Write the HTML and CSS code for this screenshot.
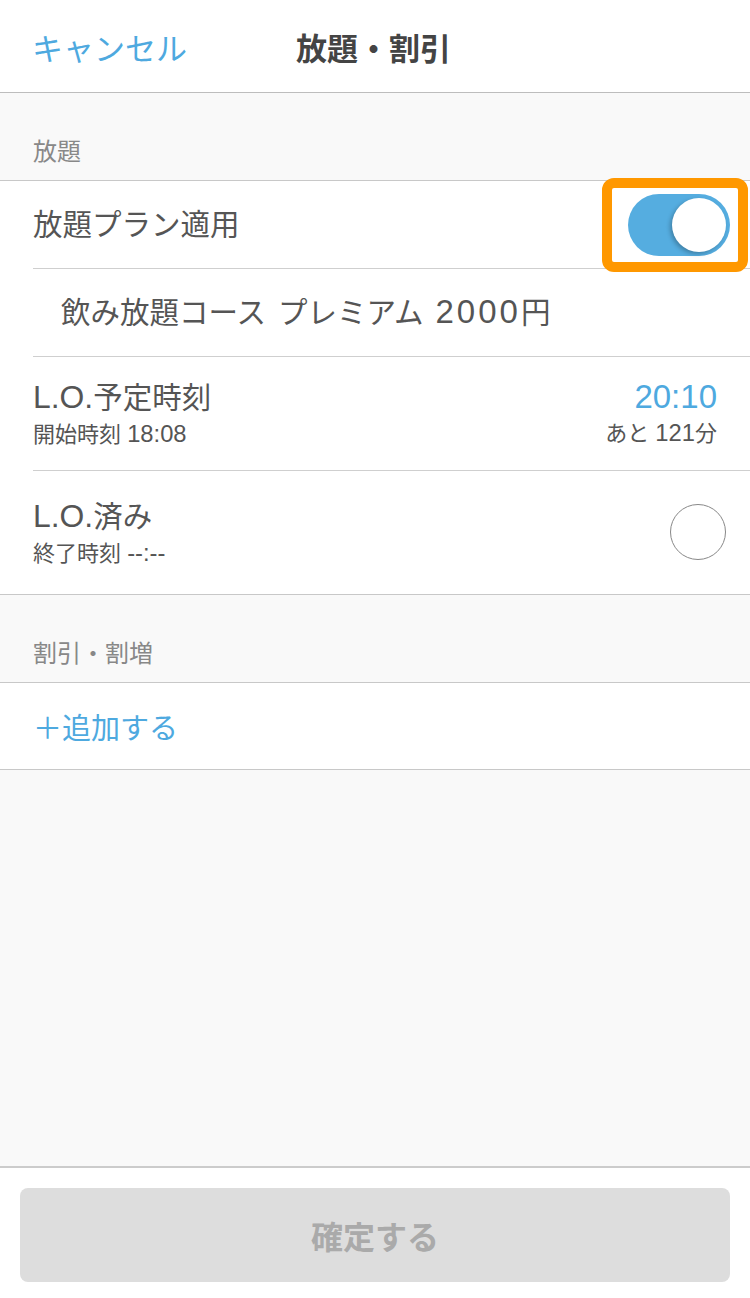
FILE: index.html
```html
<!DOCTYPE html>
<html lang="ja">
<head>
<meta charset="utf-8">
<link rel="stylesheet" href="styles.css">
</head>
<body>
<div class="screen">
  <header class="nav">
    <span class="nav-cancel">キャンセル</span>
    <span class="nav-title">放題・割引</span>
  </header>
  <main class="content">
    <div class="section-head"><span>放題</span></div>
    <div class="group">
      <div class="row row-plan">
        <span class="row-title">放題プラン適用</span>
        <div class="highlight">
          <div class="switch on"><div class="knob"></div></div>
        </div>
      </div>
      <div class="row row-course">
        <span class="row-title">飲み放題コース<span class="gap"></span>プレミアム<span class="gap"></span><span class="num price">2000</span>円</span>
      </div>
      <div class="row row-two">
        <div class="col">
          <span class="row-title"><span class="num">L.O.</span>予定時刻</span>
          <span class="row-sub">開始時刻 <span class="num">18:08</span></span>
        </div>
        <div class="col col-right">
          <span class="time">20:10</span>
          <span class="row-sub">あと <span class="num">121</span>分</span>
        </div>
      </div>
      <div class="row row-two row-last">
        <div class="col">
          <span class="row-title"><span class="num">L.O.</span>済み</span>
          <span class="row-sub">終了時刻 <span class="num">--:--</span></span>
        </div>
        <div class="check"></div>
      </div>
    </div>
    <div class="section-head"><span>割引・割増</span></div>
    <div class="group">
      <div class="row row-add row-last">
        <span class="add">＋追加する</span>
      </div>
    </div>
    <div class="filler"></div>
  </main>
  <footer class="footer">
    <button class="confirm">確定する</button>
  </footer>
</div>
</body>
</html>
```
FILE: styles.css
```css
* { box-sizing: border-box; }
html, body { margin: 0; padding: 0; }
body {
  font-family: "Liberation Sans", "Noto Sans CJK JP", sans-serif;
  background: #ffffff;
  color: #555555;
}
.screen {
  width: 750px;
  height: 1298px;
  display: flex;
  flex-direction: column;
}
.nav {
  height: 93px;
  flex: none;
  display: flex;
  align-items: center;
  padding-left: 32px;
  border-bottom: 1px solid #bdbdbd;
  background: #fff;
}
.nav-cancel {
  color: #4ea9df;
  font-size: 31px;
  width: 264px;
}
.nav-title {
  font-size: 31px;
  font-weight: bold;
  color: #444;
}
.content {
  flex: 1;
  display: flex;
  flex-direction: column;
  background: #f9f9f9;
}
.section-head {
  height: 88px;
  display: flex;
  align-items: flex-end;
  padding: 0 0 13px 33px;
  font-size: 24px;
  color: #888;
  border-bottom: 1px solid #c8c8c8;
}
.group {
  background: #fff;
  border-bottom: 1px solid #c8c8c8;
  padding-left: 33px;
}
.row {
  display: flex;
  align-items: center;
  justify-content: space-between;
  border-bottom: 1px solid #cfcfcf;
  padding-right: 33px;
}
.row-last { border-bottom: none; }
.row-title {
  font-size: 29.5px;
  line-height: 40px;
  color: #555;
}
.num { font-size: 1.08em; }
.gap {
  display: inline-block;
  width: 12px;
}
.price {
  letter-spacing: 3px;
  font-size: 1.12em;
}
.row-plan {
  height: 88px;
  padding-right: 2px;
}
.row-course {
  height: 88px;
  padding-left: 28px;
}
.row-two { height: 114px; }
.row-two.row-last { height: 123px; }
.col {
  display: flex;
  flex-direction: column;
  gap: 0;
}
.col-right { align-items: flex-end; }
.row-sub {
  font-size: 22px;
  line-height: 32px;
  color: #555;
}
.time {
  font-size: 33px;
  color: #4ea9df;
  line-height: 40px;
}
.highlight {
  width: 146px;
  height: 94px;
  border: 10px solid #ff9800;
  border-radius: 12px;
  background: #fff;
  display: flex;
  align-items: center;
  justify-content: flex-end;
  padding-right: 8px;
}
.switch {
  width: 102px;
  height: 62px;
  border-radius: 31px;
  background: #55ade0;
  position: relative;
}
.knob {
  position: absolute;
  top: 4px;
  right: 4px;
  width: 54px;
  height: 54px;
  border-radius: 50%;
  background: #fff;
  box-shadow: -2px 2px 4px rgba(0,0,0,0.25);
}
.check {
  width: 56px;
  height: 56px;
  border-radius: 50%;
  border: 1px solid #888;
  margin-right: -9px;
  margin-top: -1px;
}
.row-add { height: 86px; }
.add {
  font-size: 29px;
  color: #4ea9df;
}
.filler { flex: 1; }
.footer {
  height: 132px;
  flex: none;
  border-top: 2px solid #cccccc;
  background: #fff;
  padding: 20px 20px 16px;
}
.confirm {
  width: 100%;
  height: 94px;
  border: none;
  border-radius: 8px;
  background: #dddddd;
  color: #aaaaaa;
  font-family: "Noto Sans CJK JP", sans-serif;
  font-size: 32px;
  font-weight: bold;
}
```
